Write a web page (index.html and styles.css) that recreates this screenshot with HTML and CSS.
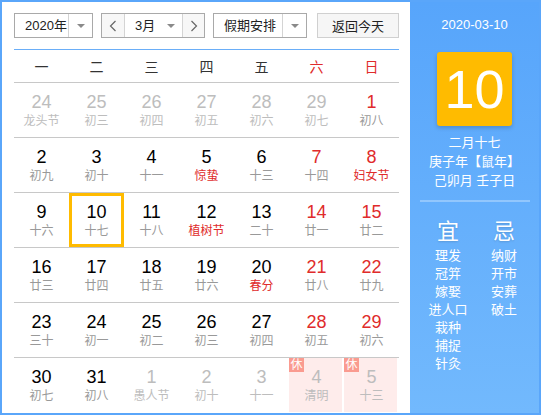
FILE: index.html
```html
<!DOCTYPE html>
<html lang="zh-CN">
<head>
<meta charset="utf-8">
<title>万年历</title>
<link rel="stylesheet" href="styles.css">
</head>
<body>
<div class="cal">
  <div class="main">
    <div class="toolbar">
      <div class="select year">
        <span class="sel-text">2020年</span>
        <span class="sel-arrow"><i class="tri"></i></span>
      </div>
      <div class="select month">
        <span class="nav"><svg width="8" height="12" viewBox="0 0 8 12"><polyline points="6.5,1 1.5,6 6.5,11" fill="none" stroke="#666" stroke-width="1.2"/></svg></span>
        <span class="month-mid"><span class="sel-text">3月</span><i class="tri"></i></span>
        <span class="nav nav-r"><svg width="8" height="12" viewBox="0 0 8 12"><polyline points="1.5,1 6.5,6 1.5,11" fill="none" stroke="#666" stroke-width="1.2"/></svg></span>
      </div>
      <div class="select holiday">
        <span class="sel-text">假期安排</span>
        <span class="sel-arrow"><i class="tri"></i></span>
      </div>
      <button class="today-btn">返回今天</button>
    </div>

    <div class="weekhead">
      <span>一</span><span>二</span><span>三</span><span>四</span><span>五</span><span class="red">六</span><span class="red">日</span>
    </div>

    <div class="row">
      <div class="cell other"><b>24</b><em>龙头节</em></div>
      <div class="cell other"><b>25</b><em>初三</em></div>
      <div class="cell other"><b>26</b><em>初四</em></div>
      <div class="cell other"><b>27</b><em>初五</em></div>
      <div class="cell other"><b>28</b><em>初六</em></div>
      <div class="cell other"><b>29</b><em>初七</em></div>
      <div class="cell weekend"><b>1</b><em>初八</em></div>
    </div>
    <div class="row">
      <div class="cell"><b>2</b><em>初九</em></div>
      <div class="cell"><b>3</b><em>初十</em></div>
      <div class="cell"><b>4</b><em>十一</em></div>
      <div class="cell"><b>5</b><em class="fest">惊蛰</em></div>
      <div class="cell"><b>6</b><em>十三</em></div>
      <div class="cell weekend"><b>7</b><em>十四</em></div>
      <div class="cell weekend"><b>8</b><em class="fest">妇女节</em></div>
    </div>
    <div class="row">
      <div class="cell"><b>9</b><em>十六</em></div>
      <div class="cell today"><b>10</b><em>十七</em></div>
      <div class="cell"><b>11</b><em>十八</em></div>
      <div class="cell"><b>12</b><em class="fest">植树节</em></div>
      <div class="cell"><b>13</b><em>二十</em></div>
      <div class="cell weekend"><b>14</b><em>廿一</em></div>
      <div class="cell weekend"><b>15</b><em>廿二</em></div>
    </div>
    <div class="row">
      <div class="cell"><b>16</b><em>廿三</em></div>
      <div class="cell"><b>17</b><em>廿四</em></div>
      <div class="cell"><b>18</b><em>廿五</em></div>
      <div class="cell"><b>19</b><em>廿六</em></div>
      <div class="cell"><b>20</b><em class="fest">春分</em></div>
      <div class="cell weekend"><b>21</b><em>廿八</em></div>
      <div class="cell weekend"><b>22</b><em>廿九</em></div>
    </div>
    <div class="row">
      <div class="cell"><b>23</b><em>三十</em></div>
      <div class="cell"><b>24</b><em>初一</em></div>
      <div class="cell"><b>25</b><em>初二</em></div>
      <div class="cell"><b>26</b><em>初三</em></div>
      <div class="cell"><b>27</b><em>初四</em></div>
      <div class="cell weekend"><b>28</b><em>初五</em></div>
      <div class="cell weekend"><b>29</b><em>初六</em></div>
    </div>
    <div class="row last">
      <div class="cell"><b>30</b><em>初七</em></div>
      <div class="cell"><b>31</b><em>初八</em></div>
      <div class="cell other"><b>1</b><em>愚人节</em></div>
      <div class="cell other"><b>2</b><em>初十</em></div>
      <div class="cell other"><b>3</b><em>十一</em></div>
      <div class="cell other rest"><span class="badge">休</span><b>4</b><em>清明</em></div>
      <div class="cell other rest"><span class="badge">休</span><b>5</b><em>十三</em></div>
    </div>
  </div>

  <div class="side">
    <div class="side-date">2020-03-10</div>
    <div class="bigday">10</div>
    <div class="lunar">
      <div>二月十七</div>
      <div>庚子年【鼠年】</div>
      <div>己卯月 壬子日</div>
    </div>
    <div class="divider"></div>
    <div class="yiji">
      <div class="col">
        <div class="yj-title">宜</div>
        <div>理发</div><div>冠笄</div><div>嫁娶</div><div>进人口</div><div>栽种</div><div>捕捉</div><div>针灸</div>
      </div>
      <div class="col">
        <div class="yj-title">忌</div>
        <div>纳财</div><div>开市</div><div>安葬</div><div>破土</div>
      </div>
    </div>
  </div>
</div>
</body>
</html>
```

FILE: styles.css
```css
* { box-sizing: border-box; }
html, body { margin: 0; padding: 0; background: #fff; }
body {
  font-family: "Liberation Sans", "Noto Sans CJK SC", sans-serif;
  color: #333;
}
.cal {
  width: 541px;
  height: 415px;
  border: 2px solid #5aa6fa;
  display: flex;
  overflow: hidden;
}
.main {
  width: 408px;
  padding: 11px 11px 0 12px;
  background: #fff;
}
.toolbar {
  display: flex;
  height: 25px;
  margin-bottom: 11px;
}
.select {
  display: flex;
  height: 25px;
  border: 1px solid #a9a9a9;
  background: #fff;
  font-size: 13px;
  line-height: 23px;
  color: #222;
}
.sel-text { padding-left: 10px; flex: 1; }
.sel-arrow {
  width: 24px;
  border-left: 1px solid #d4d4d4;
  display: flex;
  align-items: center;
  justify-content: center;
}
.tri {
  display: inline-block;
  width: 0; height: 0;
  border-left: 4px solid transparent;
  border-right: 4px solid transparent;
  border-top: 4px solid #8a8a8a;
}
.year { width: 79px; }
.month { width: 104px; margin-left: 8px; }
.holiday { width: 94px; margin-left: 8px; }
.nav {
  width: 23px;
  background: #f7f7f7;
  border-right: 1px solid #d4d4d4;
  display: flex;
  align-items: center;
  justify-content: center;
}
.nav-r { border-right: 0; border-left: 1px solid #d4d4d4; width: 22px; }
.month-mid {
  flex: 1;
  display: flex;
  align-items: center;
  padding-right: 7px;
}
.holiday .sel-arrow { width: 24px; }
.today-btn {
  margin-left: 10px;
  width: 82px;
  height: 25px;
  border: 1px solid #d0d0d0;
  background: #f6f6f6;
  font-family: inherit;
  font-size: 13px;
  color: #222;
  padding: 0;
}
.weekhead {
  display: grid;
  grid-template-columns: repeat(7, 55px);
  border-top: 1px solid #6aaef8;
  border-bottom: 1px solid #c8c8c8;
  height: 34px;
  align-items: center;
  text-align: center;
  font-size: 14px;
  color: #333;
}
.weekhead .red { color: #e02b2b; }
.row {
  display: grid;
  grid-template-columns: repeat(7, 55px);
  height: 55px;
  border-bottom: 1px solid #c8c8c8;
}
.row.last { border-bottom: 0; height: 54px; }
.cell {
  position: relative;
  text-align: center;
  padding-top: 8px;
}
.cell b {
  display: block;
  font-weight: normal;
  font-size: 18px;
  line-height: 22px;
  color: #000;
}
.cell em {
  display: block;
  font-style: normal;
  font-size: 12px;
  line-height: 16px;
  color: #999;
}
.cell.weekend b { color: #e02b2b; }
.cell em.fest { color: #e02b2b; }
.cell.other b, .cell.other em { color: #bdbdbd; }
.cell.today { box-shadow: inset 0 0 0 3px #ffbb00; }
.cell.rest {
  background: #feeceb;
  box-shadow: inset -2px 0 0 #fff;
}
.badge {
  position: absolute;
  left: 0;
  top: 0;
  width: 15px;
  height: 14px;
  background: #fa9b90;
  color: #fff;
  font-size: 12px;
  line-height: 14px;
  text-align: center;
}
.side {
  flex: 1;
  background: linear-gradient(#57a5fb, #72b9fd);
  color: #fff;
  text-align: center;
  padding-top: 13px;
}
.side-date {
  font-size: 13px;
  line-height: 20px;
}
.bigday {
  width: 75px;
  height: 74px;
  margin: 17px auto 0;
  background: #ffbb00;
  border-radius: 3px;
  box-shadow: 0 2px 4px rgba(0, 0, 0, 0.18);
  font-size: 54px;
  line-height: 74px;
  color: #fff;
}
.lunar {
  margin-top: 7px;
  font-size: 13px;
  line-height: 19px;
}
.divider {
  height: 2px;
  margin: 10px 9px 0 10px;
  background: rgba(255, 255, 255, 0.3);
}
.yiji {
  display: flex;
  justify-content: center;
  padding-left: 3px;
  margin-top: 15px;
  font-size: 13px;
  line-height: 18px;
}
.col { width: 56px; }
.yj-title {
  font-size: 22px;
  line-height: 30px;
  text-shadow: 0 1px 2px rgba(0, 0, 0, 0.15);
}
```
